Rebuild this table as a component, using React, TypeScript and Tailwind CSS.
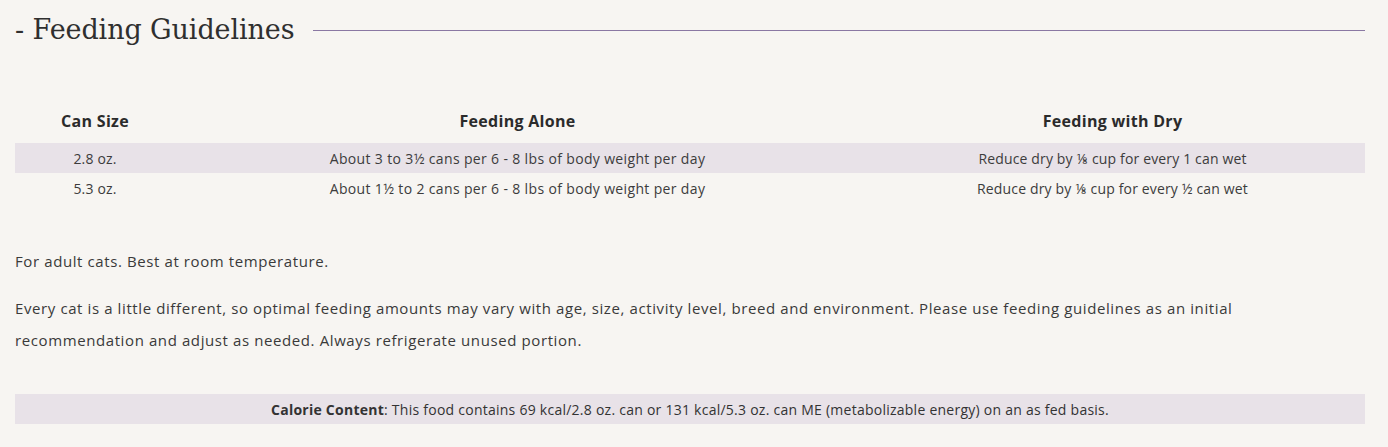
const rows = [
  {
    size: "2.8 oz.",
    alone: "About 3 to 3½ cans per 6 - 8 lbs of body weight per day",
    dry: "Reduce dry by ⅛ cup for every 1 can wet",
  },
  {
    size: "5.3 oz.",
    alone: "About 1½ to 2 cans per 6 - 8 lbs of body weight per day",
    dry: "Reduce dry by ⅛ cup for every ½ can wet",
  },
];

const FeedingTable = () => {
  return (
    <table className="w-full border-collapse table-fixed mt-[50px]">
      <colgroup>
        <col className="w-[160px]" />
        <col className="w-[685px]" />
        <col />
      </colgroup>
      <thead>
        <tr className="h-[44px] text-[16px] tracking-[0.3px] text-[#2b2b2b]">
          <th className="font-bold">Can Size</th>
          <th className="font-bold">Feeding Alone</th>
          <th className="font-bold">Feeding with Dry</th>
        </tr>
      </thead>
      <tbody className="text-[14px] text-[#3c3c3c]">
        {rows.map((row, index) => (
          <tr
            key={index}
            className={index % 2 === 0 ? "h-[30px] bg-[#e8e2e8]" : "h-[30px]"}
          >
            <td className="text-center tracking-[0.15px]">{row.size}</td>
            <td className="text-center tracking-[0.35px]">{row.alone}</td>
            <td className="text-center tracking-[0.15px]">{row.dry}</td>
          </tr>
        ))}
      </tbody>
    </table>
  );
};

export default function App() {
  return (
    <div className="min-h-[447px] bg-[#f7f5f2] pl-[15px] pr-[23px] pt-[11px] pb-[23px] font-['Open_Sans',sans-serif] text-[#3a3a3a]">
      <div className="flex items-center gap-[19px]">
        <h2 className="font-['DejaVu_Serif',serif] text-[27px] tracking-[-0.1px] leading-[38px] text-[#2f2f2f] whitespace-nowrap">
          - Feeding Guidelines
        </h2>
        <div className="h-px flex-1 bg-[#8a78a3]" />
      </div>

      <FeedingTable />

      <div className="mt-[42px] text-[15px] tracking-[0.6px] leading-[32px]">
        <p>For adult cats. Best at room temperature.</p>
        <p className="mt-[15px]">
          Every cat is a little different, so optimal feeding amounts may vary with age, size,
          activity level, breed and environment. Please use feeding guidelines as an initial
          recommendation and adjust as needed. Always refrigerate unused portion.
        </p>
      </div>

      <div className="mt-[38px] h-[30px] bg-[#e8e2e8] flex items-center justify-center text-[14px] tracking-[0.25px] text-[#333]">
        <p>
          <span className="font-bold">Calorie Content</span>: This food contains 69 kcal/2.8 oz.
          can or 131 kcal/5.3 oz. can ME (metabolizable energy) on an as fed basis.
        </p>
      </div>
    </div>
  );
}
